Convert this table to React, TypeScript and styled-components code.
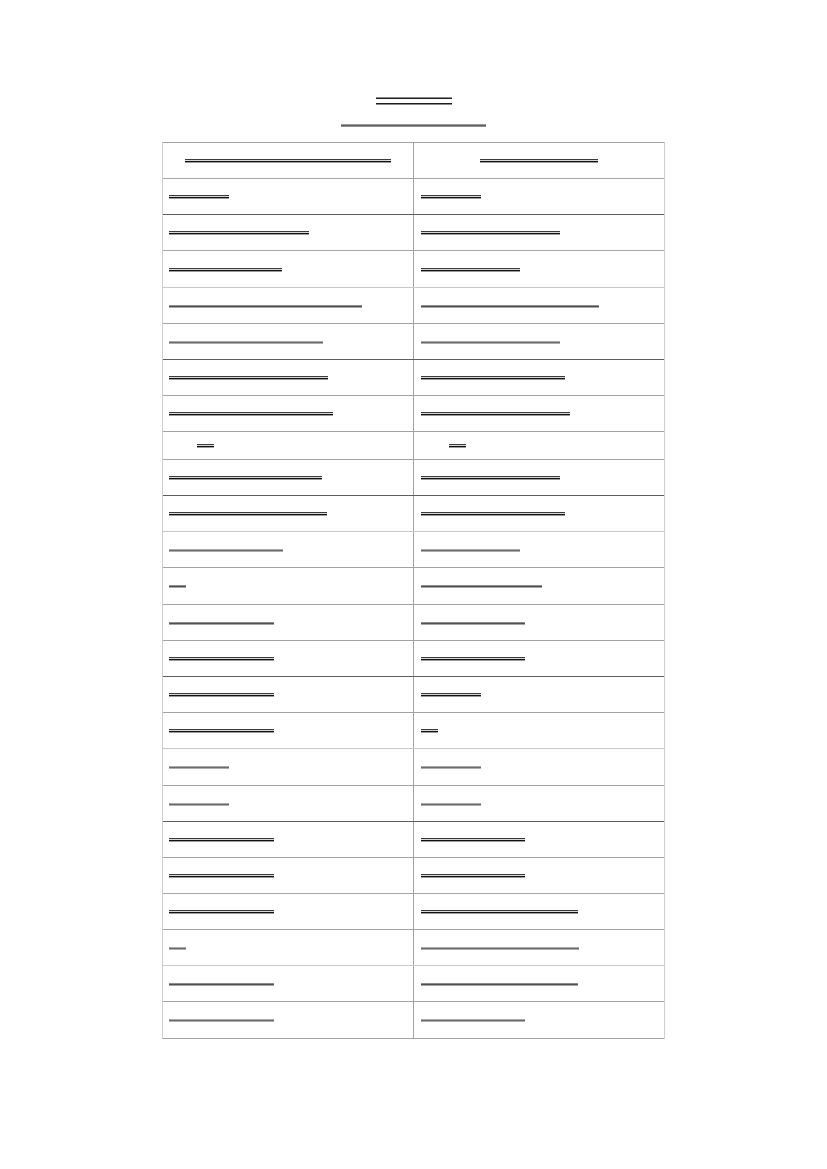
import React from "react";
import styled, { createGlobalStyle, css } from "styled-components";

const GlobalStyle = createGlobalStyle`
  body {
    margin: 0;
    background: #ffffff;
    font-family: "Liberation Sans", Arial, sans-serif;
  }
`;

type Kind = "double" | "dark" | "pale";
type Line = "g" | "d" | "l";

const lineColor: Record<Line, string> = {
  g: "#a3a3a3",
  d: "#5e5e5e",
  l: "#c8c8c8",
};

const Page = styled.div`
  width: 827px;
  min-height: 1169px;
  padding-top: 97px;
  box-sizing: border-box;
  display: flex;
  flex-direction: column;
  align-items: center;
`;

const Heading = styled.div`
  display: flex;
  flex-direction: column;
  align-items: center;
  gap: 19px;
  margin-bottom: 15px;
`;

const TitleBar = styled.div`
  width: 76px;
  height: 8px;
  background: linear-gradient(
    to bottom,
    #8a8a8a 0 1px,
    #1e1e1e 1px 2px,
    transparent 2px 6px,
    #1e1e1e 6px 7px,
    #8a8a8a 7px 8px
  );
`;

const SubtitleBar = styled.div`
  width: 145px;
  height: 3px;
  background: linear-gradient(to bottom, #9a9a9a 0 1px, #606060 1px 2px, #8e8e8e 2px 3px);
`;

const Table = styled.div`
  width: 503px;
  box-sizing: border-box;
  border-top: 1px solid #a3a3a3;
  border-left: 1px solid #cfcfcf;
  border-right: 1px solid #cfcfcf;
`;

const Row = styled.div<{ $h: number; $line: Line }>`
  display: grid;
  grid-template-columns: 250px 1fr;
  height: ${(p) => p.$h}px;
  box-sizing: border-box;
  border-bottom: 1px solid ${(p) => lineColor[p.$line]};
`;

const Cell = styled.div<{ $center?: boolean; $indent?: number; $right?: boolean }>`
  display: flex;
  align-items: center;
  justify-content: ${(p) => (p.$center ? "center" : "flex-start")};
  padding-left: ${(p) => (p.$center ? 0 : 6 + (p.$indent ?? 0))}px;
  padding-top: 1px;
  ${(p) =>
    p.$right &&
    css`
      border-left: 1px solid #a3a3a3;
      padding-left: ${p.$center ? 0 : 7 + (p.$indent ?? 0)}px;
    `}
`;

const Bar = styled.span<{ $kind: Kind }>`
  display: block;
  ${(p) =>
    p.$kind === "double"
      ? css`
          height: 4px;
          background: linear-gradient(
            to bottom,
            #3a3a3a 0 1px,
            #d8d8d8 1px 2px,
            #111111 2px 3px,
            #9c9c9c 3px 4px
          );
        `
      : p.$kind === "dark"
      ? css`
          height: 3px;
          background: linear-gradient(to bottom, #8c8c8c 0 1px, #505050 1px 2px, #a5a5a5 2px 3px);
        `
      : css`
          height: 3px;
          background: linear-gradient(to bottom, #a8a8a8 0 1px, #6c6c6c 1px 2px, #acacac 2px 3px);
        `}
`;

type RowData = {
  top: number;
  line: Line;
  left: [number, Kind];
  right: [number, Kind];
  indent?: number;
};

const header = { top: 142, line: "g" as Line, left: 206, right: 118 };

const rows: RowData[] = [
  { top: 178, line: "d", left: [60, "double"], right: [60, "double"] },
  { top: 214, line: "g", left: [140, "double"], right: [139, "double"] },
  { top: 250, line: "l", left: [113, "double"], right: [99, "double"] },
  { top: 287, line: "g", left: [193, "dark"], right: [178, "dark"] },
  { top: 323, line: "d", left: [154, "pale"], right: [139, "pale"] },
  { top: 359, line: "g", left: [159, "double"], right: [144, "double"] },
  { top: 395, line: "g", left: [164, "double"], right: [149, "double"] },
  { top: 431, line: "g", left: [17, "double"], right: [17, "double"], indent: 28 },
  { top: 459, line: "d", left: [153, "double"], right: [139, "double"] },
  { top: 495, line: "l", left: [158, "double"], right: [144, "double"] },
  { top: 531, line: "g", left: [114, "pale"], right: [99, "pale"] },
  { top: 567, line: "g", left: [17, "dark"], right: [121, "dark"] },
  { top: 604, line: "g", left: [105, "dark"], right: [104, "dark"] },
  { top: 640, line: "d", left: [105, "double"], right: [104, "double"] },
  { top: 676, line: "g", left: [105, "double"], right: [60, "double"] },
  { top: 712, line: "l", left: [105, "double"], right: [17, "double"] },
  { top: 748, line: "g", left: [60, "pale"], right: [60, "pale"] },
  { top: 785, line: "d", left: [60, "pale"], right: [60, "pale"] },
  { top: 821, line: "g", left: [105, "double"], right: [104, "double"] },
  { top: 857, line: "g", left: [105, "double"], right: [104, "double"] },
  { top: 893, line: "g", left: [105, "double"], right: [157, "double"] },
  { top: 929, line: "l", left: [17, "pale"], right: [158, "pale"] },
  { top: 965, line: "g", left: [105, "dark"], right: [157, "dark"] },
  { top: 1001, line: "g", left: [105, "pale"], right: [104, "pale"] },
];

const tableEnd = 1038;

export default function App() {
  return (
    <>
      <GlobalStyle />
      <Page>
        <Heading>
          <TitleBar />
          <SubtitleBar />
        </Heading>
        <Table>
          <Row $h={rows[0].top - header.top} $line={header.line}>
            <Cell $center>
              <Bar $kind="double" style={{ width: header.left }} />
            </Cell>
            <Cell $center $right>
              <Bar $kind="double" style={{ width: header.right }} />
            </Cell>
          </Row>
          {rows.map((r, i) => {
            const next = i + 1 < rows.length ? rows[i + 1].top : tableEnd;
            return (
              <Row key={r.top} $h={next - r.top} $line={r.line}>
                <Cell $indent={r.indent}>
                  <Bar $kind={r.left[1]} style={{ width: r.left[0] }} />
                </Cell>
                <Cell $indent={r.indent} $right>
                  <Bar $kind={r.right[1]} style={{ width: r.right[0] }} />
                </Cell>
              </Row>
            );
          })}
        </Table>
      </Page>
    </>
  );
}
